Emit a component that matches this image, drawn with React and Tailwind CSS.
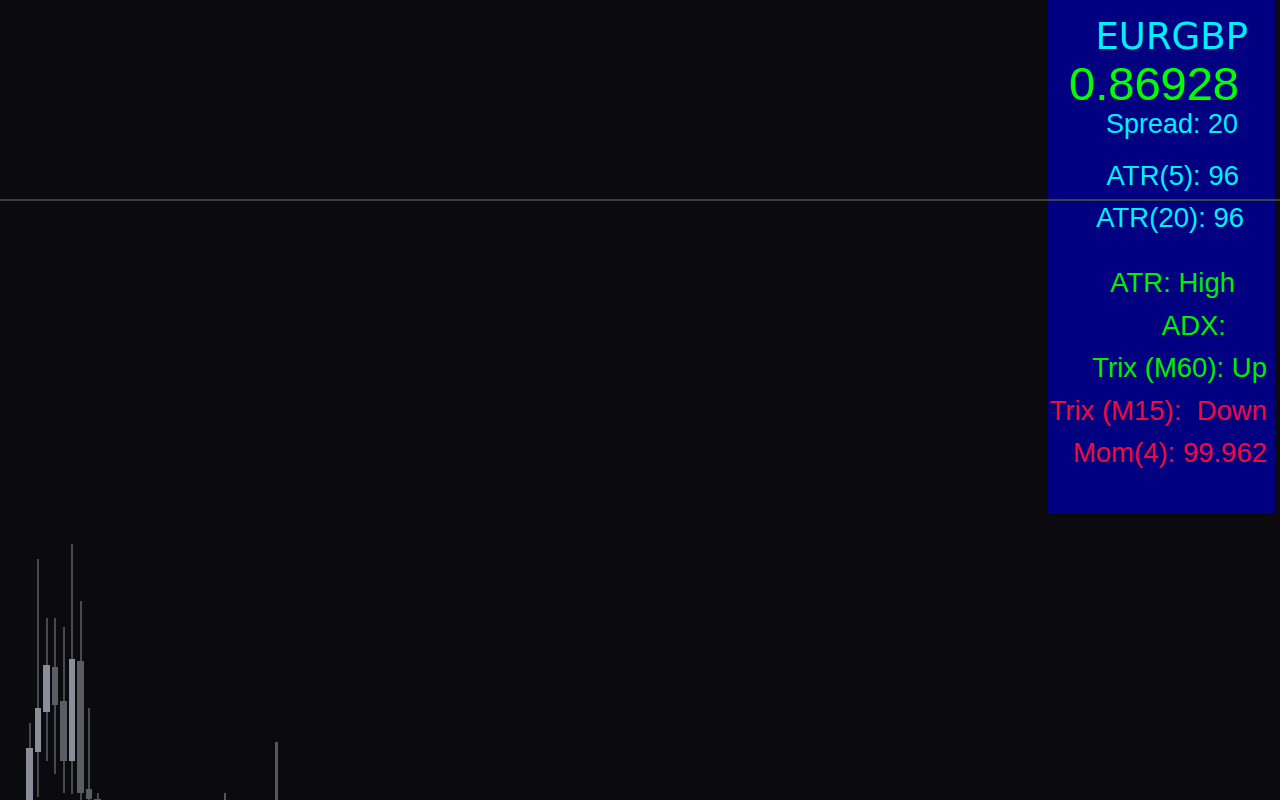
const candles = [
  // x, w, wickTop, wickBottom, bodyTop, bodyBottom, light
  { x: 26, w: 7, wt: 723, wb: 800, bt: 748, bb: 800, light: true },
  { x: 35, w: 6, wt: 559, wb: 797, bt: 708, bb: 752, light: true },
  { x: 43, w: 7, wt: 618, wb: 761, bt: 665, bb: 712, light: true },
  { x: 52, w: 6, wt: 618, wb: 774, bt: 667, bb: 705, light: false },
  { x: 60, w: 7, wt: 627, wb: 793, bt: 701, bb: 761, light: false },
  { x: 69, w: 6, wt: 544, wb: 794, bt: 659, bb: 761, light: true },
  { x: 77, w: 7, wt: 601, wb: 800, bt: 661, bb: 793, light: false },
  { x: 86, w: 6, wt: 708, wb: 800, bt: 789, bb: 799, light: false },
  { x: 94, w: 7, wt: 793, wb: 800, bt: 799, bb: 800, light: false },
]

const sticks = [
  { x: 224, w: 2, top: 793 },
  { x: 275, w: 3, top: 742 },
]

function Candle({ c }) {
  const mid = c.x + Math.round((c.w - 2) / 2)
  return (
    <>
      <div
        className="absolute w-[2px] bg-[#48484f]"
        style={{ left: mid, top: c.wt, height: c.wb - c.wt }}
      />
      <div
        className={c.light ? 'absolute bg-[#8d8d99]' : 'absolute bg-[#5c5c63]'}
        style={{ left: c.x, top: c.bt, width: c.w, height: Math.max(c.bb - c.bt, 1) }}
      />
    </>
  )
}

function Row({ children, className }) {
  return (
    <div className={'whitespace-pre text-[27.5px] leading-[42.5px] ' + className}>{children}</div>
  )
}

export default function App() {
  return (
    <div className="relative w-[1280px] h-[800px] overflow-hidden bg-[#0a0a0f] font-['Liberation_Sans',Arial,sans-serif]">
      {/* chart */}
      {candles.map((c, i) => (
        <Candle key={i} c={c} />
      ))}
      {sticks.map((s, i) => (
        <div
          key={i}
          className="absolute bg-[#55555c]"
          style={{ left: s.x, top: s.top, width: s.w, height: 800 - s.top }}
        />
      ))}

      {/* info panel */}
      <div className="absolute top-0 right-[5px] w-[227px] h-[513px] bg-[#000080] flex flex-col items-end pt-[15px]">
        <div className="mr-[27px] text-[37px] leading-[44px] text-[#00f0ff] font-['DejaVu_Sans',sans-serif]">
          EURGBP
        </div>
        <div className="mr-[36px] text-[47px] leading-[50px] text-[#00ff00]">0.86928</div>
        <div className="mr-[37px] text-[27px] leading-[30px] text-[#00f0ff]">Spread: 20</div>
        <Row className="mt-[16px] mr-[36px] !leading-[42px] text-[#00f0ff]">ATR(5): 96</Row>
        <Row className="mr-[31px] !leading-[42px] text-[#00f0ff]">ATR(20): 96</Row>
        <Row className="mt-[23px] mr-[40px] text-[#00ee00]">ATR: High</Row>
        <Row className="mr-[49px] text-[#00ee00]">ADX:</Row>
        <Row className="mr-[8px] text-[#00ee00]">Trix (M60): Up</Row>
        <Row className="mr-[8px] text-[#f00a3c]">Trix (M15):  Down</Row>
        <Row className="mr-[8px] text-[#f00a3c]">Mom(4): 99.962</Row>
      </div>

      {/* price line */}
      <div className="absolute left-0 right-0 top-[199px] h-[2px] bg-[#3e3e48]" />
    </div>
  )
}
